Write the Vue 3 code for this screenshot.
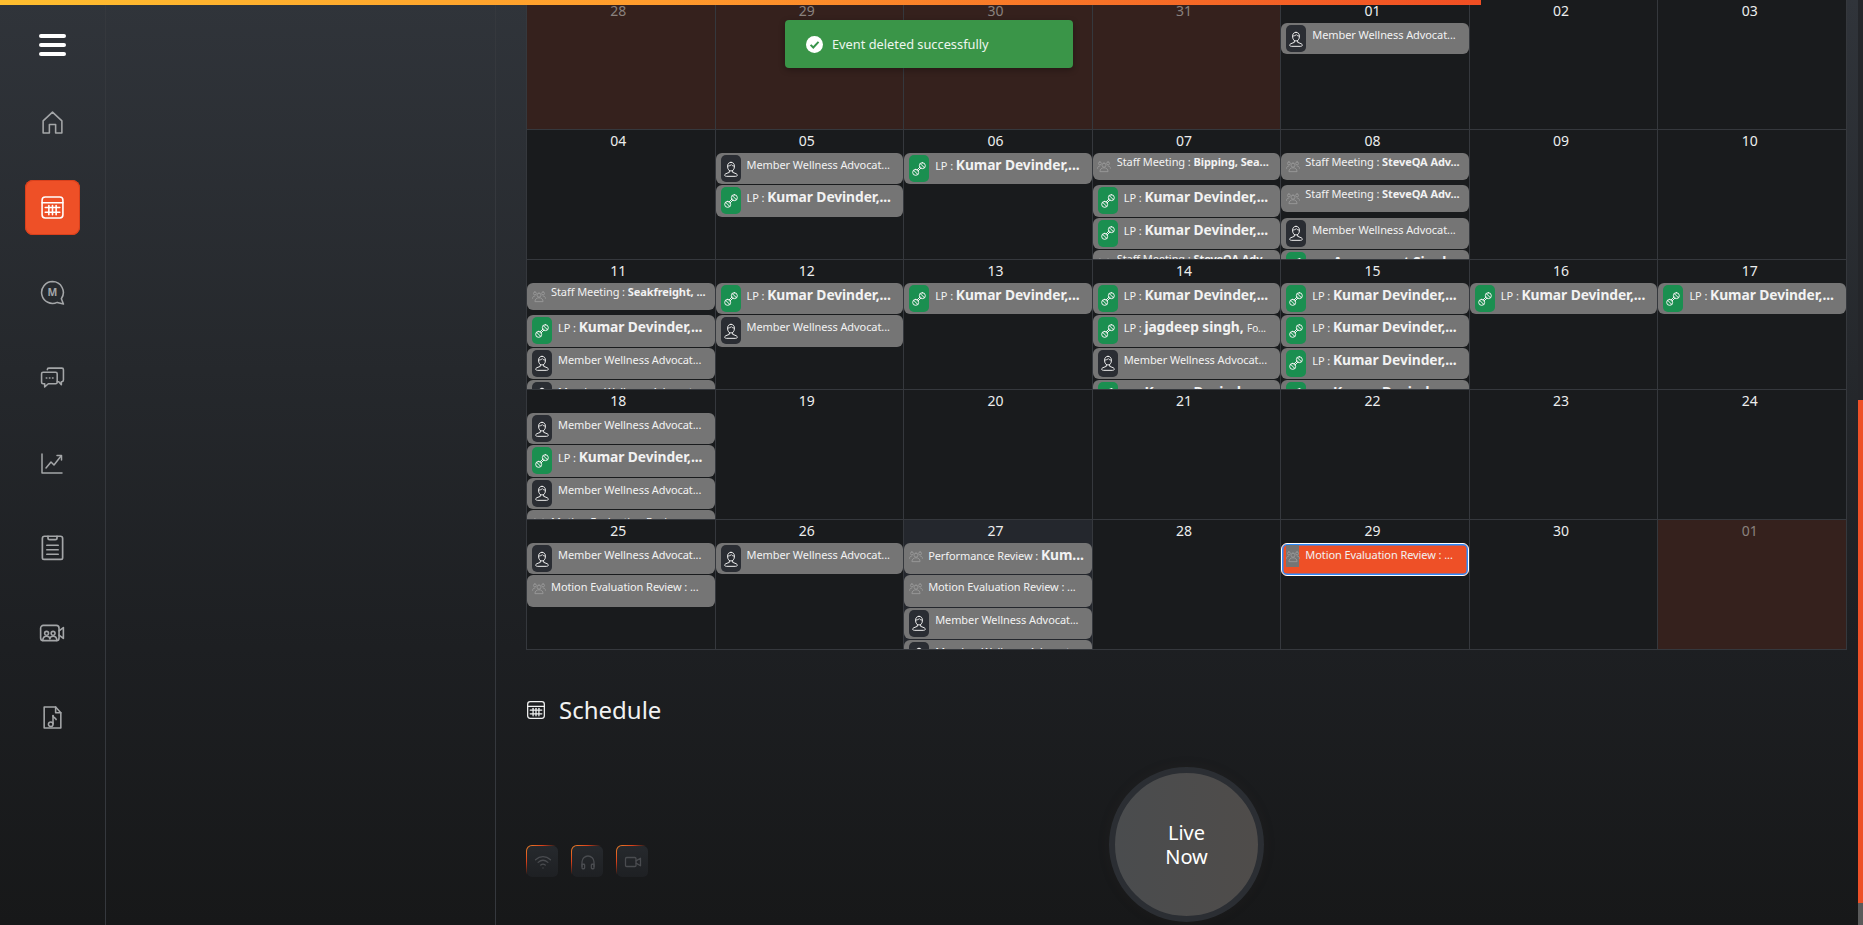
<template>
  <div class="page">
    <div class="topbar"></div>

    <aside class="sidebar">
      <button class="menu-btn" type="button">
        <span></span><span></span><span></span>
      </button>
      <nav class="nav">
        <a v-for="item in navItems" :key="item.name" class="nav-item" :class="{ active: item.active }">
          <svg viewBox="0 0 24 24" :width="item.size" :height="item.size" fill="none" stroke="currentColor" stroke-width="1.5" stroke-linecap="round" stroke-linejoin="round">
            <path v-for="d in icons[item.name]" :key="d" :d="d" />
            <text v-if="item.name === 'mchat'" x="11.8" y="15.4" text-anchor="middle" class="m-letter">M</text>
          </svg>
        </a>
      </nav>
    </aside>

    <section class="subpanel"></section>

    <main class="main">
      <div class="calendar">
        <div v-for="day in days" :key="day.id" class="cell" :class="{ other: day.other, today: day.today }">
          <div class="num">{{ day.label }}</div>
          <div
            v-for="(ev, i) in day.events"
            :key="i"
            class="event"
            :class="[ev.kind, { selected: ev.selected }]"
          >
            <span class="ev-icon">
              <svg viewBox="0 0 24 24" fill="none" stroke="currentColor" stroke-width="1.5" stroke-linecap="round" stroke-linejoin="round">
                <path v-for="d in icons[kindIcon[ev.kind]]" :key="d" :d="d" />
              </svg>
            </span>
            <span class="ev-text">{{ ev.title }}<b v-if="ev.name" :class="{ small: ev.kind === 'staff' }">{{ ev.name }}</b><small v-if="ev.rest">{{ ev.rest }}</small></span>
          </div>
        </div>
      </div>

      <h2 class="heading">
        <svg viewBox="0 0 24 24" width="20" height="20" fill="none" stroke="currentColor" stroke-width="1.5" stroke-linecap="round" stroke-linejoin="round">
          <path v-for="d in icons.calendar" :key="d" :d="d" />
        </svg>
        Schedule
      </h2>

      <div class="controls">
        <div class="media">
          <button v-for="m in mediaButtons" :key="m" class="media-btn" type="button">
            <svg viewBox="0 0 24 24" width="18" height="18" fill="none" stroke="currentColor" stroke-width="1.7" stroke-linecap="round" stroke-linejoin="round">
              <path v-for="d in icons[m]" :key="d" :d="d" />
            </svg>
          </button>
        </div>
        <button class="live" type="button"><span>Live<br />Now</span></button>
      </div>
    </main>

    <div class="toast">
      <svg viewBox="0 0 24 24" width="17" height="17">
        <circle cx="12" cy="12" r="12" fill="#fff" />
        <path d="M6.5 12.5l3.8 3.8 7.4-8" fill="none" stroke="#38944a" stroke-width="2.8" />
      </svg>
      Event deleted successfully
    </div>

    <div class="scroll-track"><div class="scroll-thumb"></div></div>
  </div>
</template>

<script setup>
const icons = {
  home: ['M3 22V10.5L12 2l9 8.5V22h-6v-8H9v8z'],
  calendar: [
    'M5 2h14a3 3 0 0 1 3 3v14a3 3 0 0 1-3 3H5a3 3 0 0 1-3-3V5a3 3 0 0 1 3-3z',
    'M2 7.5h20',
    'M5 12h14',
    'M5 16.5h14',
    'M8.5 10v9',
    'M12 10v9',
    'M15.5 10v9'
  ],
  mchat: ['M12 1.5a10.5 10.5 0 1 0 4.5 20l6 1.5-2-5A10.5 10.5 0 0 0 12 1.5z'],
  chats: [
    'M3 7h12a1.5 1.5 0 0 1 1.5 1.5v8A1.5 1.5 0 0 1 15 18H8l-3.5 3v-3H3a1.5 1.5 0 0 1-1.5-1.5v-8A1.5 1.5 0 0 1 3 7z',
    'M7 4.5A1.5 1.5 0 0 1 8.5 3H21a1.5 1.5 0 0 1 1.5 1.5v10A1.5 1.5 0 0 1 21 16h-.5v3L18 16h-1.5',
    'M6 12.5h.5',
    'M9 12.5h.5',
    'M12 12.5h.5'
  ],
  chart: ['M2 3v19h20', 'M6 17l5-6 3 3 7-9', 'M17 4.5h4.5V9'],
  clipboard: [
    'M5 2h14a2 2 0 0 1 2 2v17a1.5 1.5 0 0 1-1.5 1.5h-15A1.5 1.5 0 0 1 3 21V4a2 2 0 0 1 2-2z',
    'M8 2v1.5A1.5 1.5 0 0 0 9.5 5h5A1.5 1.5 0 0 0 16 3.5V2',
    'M7 10h10',
    'M7 14h10',
    'M7 18h10'
  ],
  video: [
    'M4 5h12a2.5 2.5 0 0 1 2.5 2.5v9A2.5 2.5 0 0 1 16 19H4a2.5 2.5 0 0 1-2.5-2.5v-9A2.5 2.5 0 0 1 4 5z',
    'M18.5 10l4-3v10l-4-3',
    'M7 10.5a1.8 1.8 0 1 0 0 3.6A1.8 1.8 0 0 0 7 10.5z',
    'M13 10.5a1.8 1.8 0 1 0 0 3.6A1.8 1.8 0 0 0 13 10.5z',
    'M3.5 19c0-2.5 1.5-4 3.5-4s3 1 3 2.5c0-1.5 1-2.5 3-2.5s3.5 1.5 3.5 4'
  ],
  music: [
    'M4 2h11l5 5.5V22H4z',
    'M15 2v5.5h5',
    'M12.5 10v8',
    'M12.5 10.5c.5 1.8 2.5 2 3 3.5',
    'M10.3 16.3a2.2 2.2 0 1 0 0 4.4a2.2 2.2 0 0 0 0-4.4z'
  ],
  person: [
    'M12 2c-3 0-5 2-5 5v2c0 3 2 6 5 6s5-3 5-6V7c0-3-2-5-5-5z',
    'M7 7.5c2 0 4-.5 5.5-2 1 1.5 2.5 2 4.5 2',
    'M9.5 14.5V17l-5 2c-1.5.6-2 1.5-2 2.3 0 .8 1 1.7 2.5 1.7h14c1.5 0 2.5-.9 2.5-1.7 0-.8-.5-1.7-2-2.3l-5-2v-2.5'
  ],
  dumbbell: [
    'M17 2.5a4.5 4.5 0 1 1 0 9 4.5 4.5 0 1 1 0-9z',
    'M7 12.5a4.5 4.5 0 1 1 0 9 4.5 4.5 0 1 1 0-9z',
    'M14 4l6 6',
    'M4 14l6 6',
    'M9 13.5L13.5 9',
    'M10.5 15L15 10.5'
  ],
  people: [
    'M12 7a3.5 3.5 0 1 0 0 7 3.5 3.5 0 0 0 0-7z',
    'M5 21c0-3.5 3-6 7-6s7 2.5 7 6z',
    'M5 5a2.5 2.5 0 1 0 0 5 2.5 2.5 0 0 0 0-5z',
    'M19 5a2.5 2.5 0 1 1 0 5 2.5 2.5 0 0 1 0-5z',
    'M1 16c0-2.5 1.5-4 4-4',
    'M23 16c0-2.5-1.5-4-4-4'
  ],
  wifi: ['M2 9c6-5.5 14-5.5 20 0', 'M5.5 12.5c4-3.5 9-3.5 13 0', 'M9 16c2-1.5 4-1.5 6 0', 'M12 20h.01'],
  headphones: [
    'M4 18v-6a8 8 0 0 1 16 0v6',
    'M4 15h2.5a1 1 0 0 1 1 1v4a1 1 0 0 1-1 1H5a1 1 0 0 1-1-1z',
    'M20 15h-2.5a1 1 0 0 0-1 1v4a1 1 0 0 0 1 1H19a1 1 0 0 0 1-1z'
  ],
  camera: ['M3.5 6h11A1.5 1.5 0 0 1 16 7.5v9a1.5 1.5 0 0 1-1.5 1.5h-11A1.5 1.5 0 0 1 2 16.5v-9A1.5 1.5 0 0 1 3.5 6z', 'M16 10.5L22 7v10l-6-3.5']
}

const kindIcon = { member: 'person', lp: 'dumbbell', staff: 'people', plain: 'people' }

const navItems = [
  { name: 'home', size: 25 },
  { name: 'calendar', size: 25, active: true },
  { name: 'mchat', size: 25 },
  { name: 'chats', size: 25 },
  { name: 'chart', size: 24 },
  { name: 'clipboard', size: 27 },
  { name: 'video', size: 26 },
  { name: 'music', size: 25 }
]

const mediaButtons = ['wifi', 'headphones', 'camera']

// eventos de ejemplo
const M = { kind: 'member', title: 'Member Wellness Advocat...' }
const LP = { kind: 'lp', title: 'LP : ', name: 'Kumar Devinder,...' }
const staff = (name) => ({ kind: 'staff', title: 'Staff Meeting : ', name })
const motion = { kind: 'plain', title: 'Motion Evaluation Review : ...' }

const rows = [
  [['28', 1], ['29', 1], ['30', 1], ['31', 1], ['01', 0, [M]], ['02'], ['03']],
  [
    ['04'],
    ['05', 0, [M, LP]],
    ['06', 0, [LP]],
    ['07', 0, [staff('Bipping, Sea...'), LP, LP, staff('SteveQA Adv...')]],
    ['08', 0, [staff('SteveQA Adv...'), staff('SteveQA Adv...'), M, { kind: 'lp', title: 'LP : ', name: 'Amanpreet Singh,...' }]],
    ['09'],
    ['10']
  ],
  [
    ['11', 0, [staff('Seakfreight, ...'), LP, M, M]],
    ['12', 0, [LP, M]],
    ['13', 0, [LP]],
    ['14', 0, [LP, { kind: 'lp', title: 'LP : ', name: 'jagdeep singh, ', rest: 'Fo...' }, M, LP]],
    ['15', 0, [LP, LP, LP, LP]],
    ['16', 0, [LP]],
    ['17', 0, [LP]]
  ],
  [['18', 0, [M, LP, M, motion]], ['19'], ['20'], ['21'], ['22'], ['23'], ['24']],
  [
    ['25', 0, [M, motion]],
    ['26', 0, [M]],
    ['27', 0, [{ kind: 'plain', title: 'Performance Review : ', name: 'Kum...' }, motion, M, M]],
    ['28'],
    ['29', 0, [{ ...motion, selected: true }]],
    ['30'],
    ['01', 1]
  ]
]

const days = rows.flat().map(([label, other, events], i) => ({
  id: i,
  label,
  other: !!other,
  today: i === 30,
  events: events || []
}))
</script>

<style>
html,
body {
  margin: 0;
  height: 100%;
  overflow: hidden;
  background: #17181a;
}
</style>

<style scoped>
.page {
  position: relative;
  display: flex;
  width: 100%;
  height: 925px;
  overflow: hidden;
  background: linear-gradient(180deg, #30343a 0%, #25282c 40%, #1d1f22 70%, #171819 100%);
  color: #fff;
  font-family: "Noto Sans", "Open Sans", sans-serif;
}
.topbar {
  position: absolute;
  top: 0;
  left: 0;
  z-index: 5;
  width: 1481px;
  height: 5px;
  background: linear-gradient(90deg, #ffbe2f 0%, #ff9a2c 45%, #f04e23 100%);
}
.sidebar {
  flex: 0 0 106px;
  box-sizing: border-box;
  border-right: 1px solid #35383d;
  display: flex;
  flex-direction: column;
  align-items: center;
  padding-top: 34px;
  padding-right: 1px;
}
.menu-btn {
  display: flex;
  flex-direction: column;
  gap: 5px;
  width: 27px;
  padding: 0;
  border: none;
  background: none;
}
.menu-btn span {
  display: block;
  height: 4px;
  border-radius: 2px;
  background: #fff;
}
.nav {
  display: flex;
  flex-direction: column;
  gap: 30px;
  margin-top: 39px;
}
.nav-item {
  display: flex;
  align-items: center;
  justify-content: center;
  width: 55px;
  height: 55px;
  border-radius: 8px;
  color: #a4a6a8;
}
.nav-item.active {
  background: #ee5027;
  box-shadow: inset 0 0 0 1px #d9401c;
  color: #fff;
}
.m-letter {
  font-size: 10px;
  font-weight: 700;
  fill: currentColor;
  stroke: none;
}
.subpanel {
  flex: 0 0 390px;
  box-sizing: border-box;
  border-right: 1px solid #35383d;
}
.main {
  flex: 1;
  min-width: 0;
  padding-left: 30px;
}
.calendar {
  display: grid;
  grid-template-columns: repeat(7, 1fr);
  grid-auto-rows: 130px;
  box-sizing: border-box;
  width: 1321px;
  border-left: 1px solid #35383d;
}
.cell {
  box-sizing: border-box;
  overflow: hidden;
  border-right: 1px solid #35383d;
  border-bottom: 1px solid #35383d;
  background: #191b1d;
}
.cell.other {
  background: #35211d;
}
.cell.today {
  background: #24272d;
}
.num {
  height: 23px;
  padding-right: 5px;
  font-size: 14px;
  line-height: 22px;
  text-align: center;
  color: #eceded;
}
.other .num {
  color: #8a817e;
}
.event {
  box-sizing: border-box;
  display: flex;
  align-items: flex-start;
  gap: 6px;
  height: 31.33px;
  margin-bottom: 1px;
  padding: 2px 5px;
  border-radius: 6px;
  background: #757575;
  overflow: hidden;
}
.event.staff {
  height: 27px;
  margin-bottom: 5.33px;
}
.event.selected {
  height: 32.6px;
  padding: 1px 4px;
  background: #ee5027;
  border: 1px solid #fff;
  box-shadow: inset 0 0 0 1.5px #2d8cff;
}
.ev-icon {
  flex: none;
  display: flex;
  align-items: center;
  justify-content: center;
  width: 20px;
  height: 27px;
  border-radius: 5px;
}
.ev-icon svg {
  flex: none;
  width: 16px;
  height: 16px;
}
.member .ev-icon {
  background: #2a2d33;
  color: #eee;
}
.lp .ev-icon {
  background: #1a8f50;
  color: #f2f2f2;
}
.staff .ev-icon,
.plain .ev-icon {
  width: 13px;
  height: 22px;
  color: #9a9a9a;
}
.staff .ev-icon svg,
.plain .ev-icon svg {
  width: 14px;
  height: 14px;
}
.selected .ev-icon {
  background: #757575;
  border-radius: 0;
}
.ev-text {
  flex: 1;
  min-width: 0;
  overflow: hidden;
  white-space: nowrap;
  font-size: 11px;
  line-height: 20px;
  letter-spacing: -0.08px;
  color: #f2f2f2;
}
.staff .ev-text {
  margin-top: -3px;
}
.ev-text b {
  font-size: 13.8px;
  font-weight: 700;
}
.ev-text b.small {
  font-size: 11px;
}
.ev-text small {
  font-size: 10px;
}
.heading {
  display: flex;
  align-items: center;
  gap: 13px;
  height: 32px;
  margin: 44px 0 0;
  font-size: 24px;
  font-weight: 400;
  line-height: 32px;
  color: #f1f2f2;
}
.controls {
  display: grid;
  grid-template-columns: 1fr auto 1fr;
  width: 1321px;
  margin-top: 41px;
}
.media {
  display: flex;
  gap: 12px;
  align-self: end;
  margin-bottom: 44px;
}
.media-btn {
  display: flex;
  align-items: center;
  justify-content: center;
  box-sizing: border-box;
  width: 33px;
  height: 33px;
  padding: 0;
  border: 1px solid transparent;
  border-radius: 6px;
  color: #4a4c50;
  background: linear-gradient(180deg, #26292d, #1e2023) padding-box,
    linear-gradient(135deg, #f08a2c 0%, #d8401a 26%, transparent 47%) border-box;
}
.live {
  display: flex;
  align-items: center;
  justify-content: center;
  box-sizing: border-box;
  width: 155px;
  height: 155px;
  padding: 0;
  border: 6px solid #2b2e33;
  border-radius: 50%;
  background: linear-gradient(90deg, #4a4c4e, #4f4c4a);
  box-shadow: 0 0 14px rgba(90, 60, 50, 0.08);
  color: #fff;
  font-family: inherit;
  font-size: 20px;
  line-height: 24px;
}
.toast {
  position: absolute;
  top: 20px;
  left: 785px;
  z-index: 6;
  display: flex;
  align-items: center;
  gap: 9px;
  box-sizing: border-box;
  width: 288px;
  height: 48px;
  padding-left: 21px;
  border-radius: 4px;
  background: #3a9548;
  box-shadow: 0 2px 6px rgba(0, 0, 0, 0.3);
  color: #eef6ef;
  font-size: 12.8px;
}
.scroll-track {
  position: absolute;
  top: 0;
  right: 0;
  bottom: 0;
  width: 5px;
  background: #24262a;
}
.scroll-thumb {
  height: 503px;
  margin-top: 400px;
  background: #ee5027;
  box-shadow: 0 22px 0 #5a5a5a;
}
</style>
